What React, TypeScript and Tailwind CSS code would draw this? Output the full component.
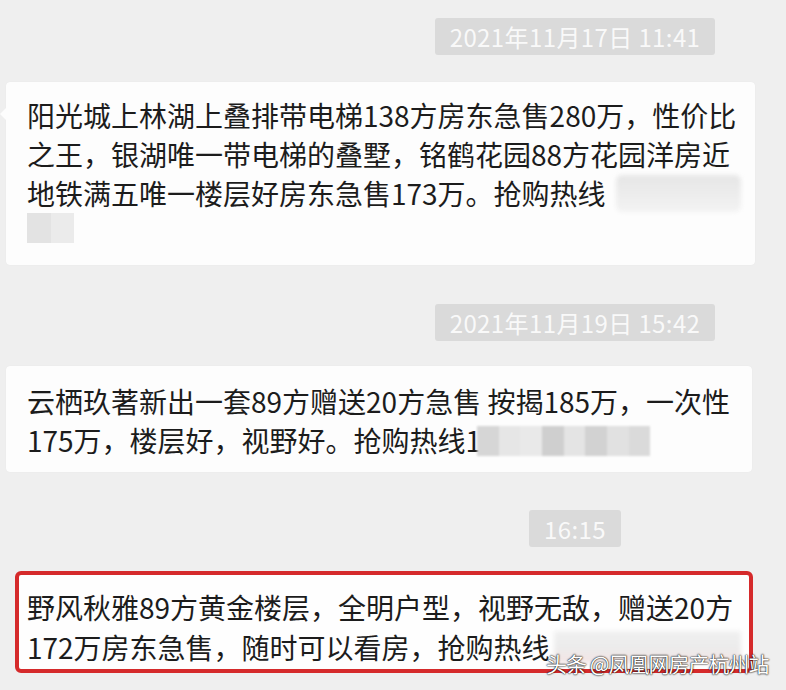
import React from 'react'

function Stamp({ text }: { text: string }) {
  return (
    <div className="ml-[364px] w-[422px] flex justify-center">
      <div className="h-[37px] px-[15px] flex items-center rounded-[3px] bg-[#dadada] text-[#f9f9f9] text-[24px] tracking-[0.4px] leading-none">
        {text}
      </div>
    </div>
  )
}

function Mosaic() {
  const shades = ['#d6d6d6', '#e6e6e6', '#e9e9e9', '#cfcfcf', '#e4e4e4', '#d2d2d2', '#e1e1e1', '#dadada']
  return (
    <span className="inline-flex align-middle h-[30px] w-[173px] -ml-[4px] blur-[1px] overflow-hidden">
      {shades.map((c, i) => (
        <span key={i} className="flex-1 h-full" style={{ background: c }} />
      ))}
    </span>
  )
}

export default function App() {
  return (
    <div className="relative h-[690px] overflow-hidden bg-[#efefef] pt-[18px] text-[#1c1c1c] font-['Noto_Sans_CJK_SC','Noto_Sans',sans-serif]">
      <Stamp text="2021年11月17日 11:41" />

      <div className="relative mt-[27px] ml-[6px] w-[749px] h-[183px] rounded-[4px] bg-[#fdfdfd] shadow-[0_0_1px_rgba(0,0,0,0.08)] pl-[21px] pt-[14px] text-[28px] leading-[39px] whitespace-nowrap">
        <span className="absolute -left-[6px] top-[26px] w-0 h-0 border-y-[6px] border-y-transparent border-r-[6px] border-r-[#fdfdfd]" />
        <div>阳光城上林湖上叠排带电梯138方房东急售280万，性价比</div>
        <div>之王，银湖唯一带电梯的叠墅，铭鹤花园88方花园洋房近</div>
        <div className="flex items-center">
          <span>地铁满五唯一楼层好房东急售173万。抢购热线</span>
          <span className="ml-[10px] h-[37px] w-[125px] rounded-[6px] bg-gradient-to-b from-[#e6e6e6] to-[#f3f3f3] blur-[2px]" />
        </div>
        <div className="h-[39px] flex items-start">
          <span className="flex h-[30px] w-[47px] blur-[0.5px]">
            <span className="flex-1 bg-[#e3e3e3]" />
            <span className="flex-1 bg-[#ebebeb]" />
          </span>
        </div>
      </div>

      <div className="mt-[39px]">
        <Stamp text="2021年11月19日 15:42" />
      </div>

      <div className="mt-[25px] ml-[6px] w-[746px] h-[106px] rounded-[4px] bg-[#fdfdfd] shadow-[0_0_1px_rgba(0,0,0,0.08)] pl-[21px] pt-[16px] text-[28px] leading-[39px] whitespace-nowrap">
        <div>云栖玖著新出一套89方赠送20方急售 按揭185万，一次性</div>
        <div className="flex items-center">
          <span>175万，楼层好，视野好。抢购热线1</span>
          <Mosaic />
        </div>
      </div>

      <div className="mt-[38px]">
        <Stamp text="16:15" />
      </div>

      <div className="mt-[24px] ml-[15px] w-[738px] h-[102px] rounded-[6px] border-[4px] border-[#d52a2b] bg-[#fefefe] pl-[8px] pt-[12px] text-[28px] leading-[40px] whitespace-nowrap">
        <div>野风秋雅89方黄金楼层，全明户型，视野无敌，赠送20方</div>
        <div className="flex items-center">
          <span>172万房东急售，随时可以看房，抢购热线</span>
          <span className="ml-[4px] h-[32px] w-[187px] bg-gradient-to-b from-[#f0f0f0] via-[#ececec] to-[#f3e4e4] blur-[2px]" />
        </div>
      </div>

      <div className="absolute left-[546px] top-[649px] text-[21px] tracking-[-1px] leading-[28px] text-white whitespace-nowrap [text-shadow:0_0_2px_#000,0_0_1px_#000]">
        头条 @凤凰网房产杭州站
      </div>
    </div>
  )
}
